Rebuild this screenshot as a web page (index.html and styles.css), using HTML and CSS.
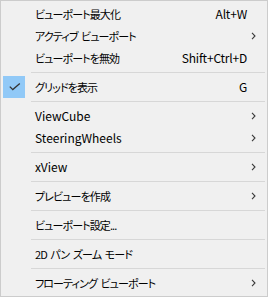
FILE: index.html
```html
<!DOCTYPE html>
<html lang="ja">
<head>
<meta charset="utf-8">
<link rel="stylesheet" href="styles.css">
</head>
<body>
<div class="menu">
  <div class="item"><span class="icon"></span><span class="label ja">ビューポート最大化</span><span class="key">Alt+W</span><span class="sub"></span></div>
  <div class="item"><span class="icon"></span><span class="label ja">アクティブ ビューポート</span><span class="key"></span><span class="sub"><svg width="5" height="8" viewBox="0 0 5 8"><path d="M1 0.8 L4 4 L1 7.2" fill="none" stroke="#3a3a3a" stroke-width="1.1"/></svg></span></div>
  <div class="item"><span class="icon"></span><span class="label ja">ビューポートを無効</span><span class="key">Shift+Ctrl+D</span><span class="sub"></span></div>
  <div class="sep"></div>
  <div class="item"><span class="icon checked"><svg width="12" height="8" viewBox="0 0 12 8"><path d="M0.8 3.6 L3.8 6.6 L10.8 0.6" fill="none" stroke="#333" stroke-width="1.3"/></svg></span><span class="label ja">グリッドを表示</span><span class="key">G</span><span class="sub"></span></div>
  <div class="sep"></div>
  <div class="item"><span class="icon"></span><span class="label">ViewCube</span><span class="key"></span><span class="sub"><svg width="5" height="8" viewBox="0 0 5 8"><path d="M1 0.8 L4 4 L1 7.2" fill="none" stroke="#3a3a3a" stroke-width="1.1"/></svg></span></div>
  <div class="item"><span class="icon"></span><span class="label">SteeringWheels</span><span class="key"></span><span class="sub"><svg width="5" height="8" viewBox="0 0 5 8"><path d="M1 0.8 L4 4 L1 7.2" fill="none" stroke="#3a3a3a" stroke-width="1.1"/></svg></span></div>
  <div class="sep"></div>
  <div class="item"><span class="icon"></span><span class="label">xView</span><span class="key"></span><span class="sub"><svg width="5" height="8" viewBox="0 0 5 8"><path d="M1 0.8 L4 4 L1 7.2" fill="none" stroke="#3a3a3a" stroke-width="1.1"/></svg></span></div>
  <div class="sep"></div>
  <div class="item"><span class="icon"></span><span class="label ja">プレビューを作成</span><span class="key"></span><span class="sub"><svg width="5" height="8" viewBox="0 0 5 8"><path d="M1 0.8 L4 4 L1 7.2" fill="none" stroke="#3a3a3a" stroke-width="1.1"/></svg></span></div>
  <div class="sep"></div>
  <div class="item"><span class="icon"></span><span class="label ja">ビューポート設定...</span><span class="key"></span><span class="sub"></span></div>
  <div class="sep"></div>
  <div class="item"><span class="icon"></span><span class="label ja">2D パン ズーム モード</span><span class="key"></span><span class="sub"></span></div>
  <div class="sep"></div>
  <div class="item"><span class="icon"></span><span class="label ja">フローティング ビューポート</span><span class="key"></span><span class="sub"><svg width="5" height="8" viewBox="0 0 5 8"><path d="M1 0.8 L4 4 L1 7.2" fill="none" stroke="#3a3a3a" stroke-width="1.1"/></svg></span></div>
</div>
</body>
</html>
```

FILE: styles.css
```css
* { box-sizing: border-box; }
html, body { margin: 0; padding: 0; background: #f0f0f0; }
.menu {
  width: 268px;
  height: 297px;
  background: #f0f0f0;
  border: 1px solid #cccccc;
  padding: 2px;
  font-family: "Noto Sans CJK JP", "Noto Sans", sans-serif;
  font-feature-settings: "palt";
  font-size: 12px;
  color: #000;
}
.item {
  display: flex;
  align-items: center;
  height: 22px;
  line-height: 22px;
}
.icon {
  width: 22px;
  height: 22px;
  flex: none;
  display: flex;
  align-items: center;
  justify-content: center;
}
.icon.checked { background: #91c9f7; }
.icon svg { display: block; margin-top: 0px; margin-left: 1px; }
.label {
  flex: 1;
  margin-left: 10px;
  white-space: nowrap;
}
.label.ja {
  font-size: 11px;
  letter-spacing: -0.9px;
  word-spacing: 2px;
}
.key { flex: none; text-align: right; white-space: nowrap; letter-spacing: -0.2px; }
.sub {
  width: 18px;
  flex: none;
  display: flex;
  align-items: center;
  padding-left: 4px;
}
.sub svg { display: block; }
.sep {
  height: 7px;
  padding-top: 3px;
  margin-left: 28px;
}
.sep::before {
  content: "";
  display: block;
  height: 1px;
  background: #d7d7d7;
}
```
